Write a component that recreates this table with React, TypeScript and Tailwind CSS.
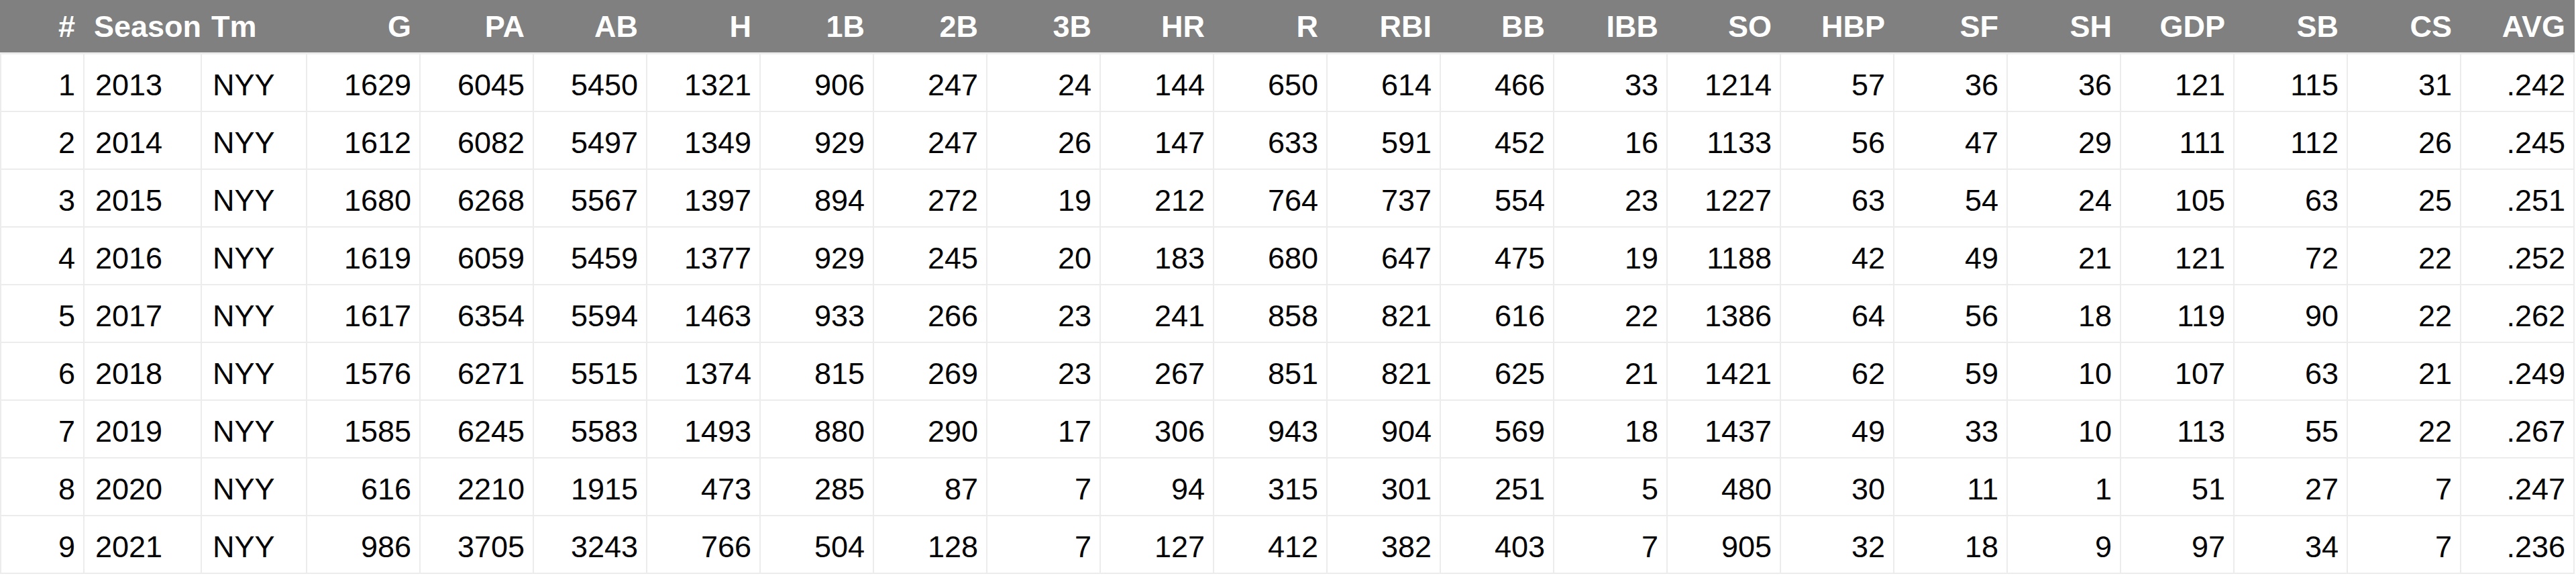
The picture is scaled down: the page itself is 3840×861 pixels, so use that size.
const headers = ["#", "Season", "Tm", "G", "PA", "AB", "H", "1B", "2B", "3B", "HR", "R", "RBI", "BB", "IBB", "SO", "HBP", "SF", "SH", "GDP", "SB", "CS", "AVG"]

const rows = [
  ["1", "2013", "NYY", "1629", "6045", "5450", "1321", "906", "247", "24", "144", "650", "614", "466", "33", "1214", "57", "36", "36", "121", "115", "31", ".242"],
  ["2", "2014", "NYY", "1612", "6082", "5497", "1349", "929", "247", "26", "147", "633", "591", "452", "16", "1133", "56", "47", "29", "111", "112", "26", ".245"],
  ["3", "2015", "NYY", "1680", "6268", "5567", "1397", "894", "272", "19", "212", "764", "737", "554", "23", "1227", "63", "54", "24", "105", "63", "25", ".251"],
  ["4", "2016", "NYY", "1619", "6059", "5459", "1377", "929", "245", "20", "183", "680", "647", "475", "19", "1188", "42", "49", "21", "121", "72", "22", ".252"],
  ["5", "2017", "NYY", "1617", "6354", "5594", "1463", "933", "266", "23", "241", "858", "821", "616", "22", "1386", "64", "56", "18", "119", "90", "22", ".262"],
  ["6", "2018", "NYY", "1576", "6271", "5515", "1374", "815", "269", "23", "267", "851", "821", "625", "21", "1421", "62", "59", "10", "107", "63", "21", ".249"],
  ["7", "2019", "NYY", "1585", "6245", "5583", "1493", "880", "290", "17", "306", "943", "904", "569", "18", "1437", "49", "33", "10", "113", "55", "22", ".267"],
  ["8", "2020", "NYY", "616", "2210", "1915", "473", "285", "87", "7", "94", "315", "301", "251", "5", "480", "30", "11", "1", "51", "27", "7", ".247"],
  ["9", "2021", "NYY", "986", "3705", "3243", "766", "504", "128", "7", "127", "412", "382", "403", "7", "905", "32", "18", "9", "97", "34", "7", ".236"],
]

// Season and Tm are text columns, everything else is right aligned
const isLeft = (i: number) => i === 1 || i === 2

export default function App() {
  return (
    <div className="w-[3840px] h-[861px] bg-white font-['Liberation_Sans',Arial,sans-serif] text-[45px] leading-none">
      <div className="w-[3838px]">
        {/* Header bar */}
        <div className="grid grid-cols-[122px_173px_155px_repeat(20,167px)] gap-x-[2px] px-[2px] h-[78px] bg-[#808080] text-white font-bold">
          {headers.map((h, i) => (
            <div
              key={h}
              className={`flex items-center whitespace-nowrap ${isLeft(i) ? "justify-start pl-[14px]" : "justify-end pr-[12px]"}`}
            >
              {h}
            </div>
          ))}
        </div>

        {/* Body rows */}
        <div className="grid grid-cols-[122px_173px_155px_repeat(20,167px)] gap-[2px] p-[2px] pt-[3px] bg-[#ececec] text-black">
          {rows.map((row) =>
            row.map((cell, i) => (
              <div
                key={row[0] + "-" + i}
                className={`h-[84px] bg-white flex items-center pt-[6px] whitespace-nowrap ${isLeft(i) ? "justify-start pl-[16px]" : "justify-end pr-[12px]"}`}
              >
                {cell}
              </div>
            ))
          )}
        </div>
      </div>
    </div>
  )
}
